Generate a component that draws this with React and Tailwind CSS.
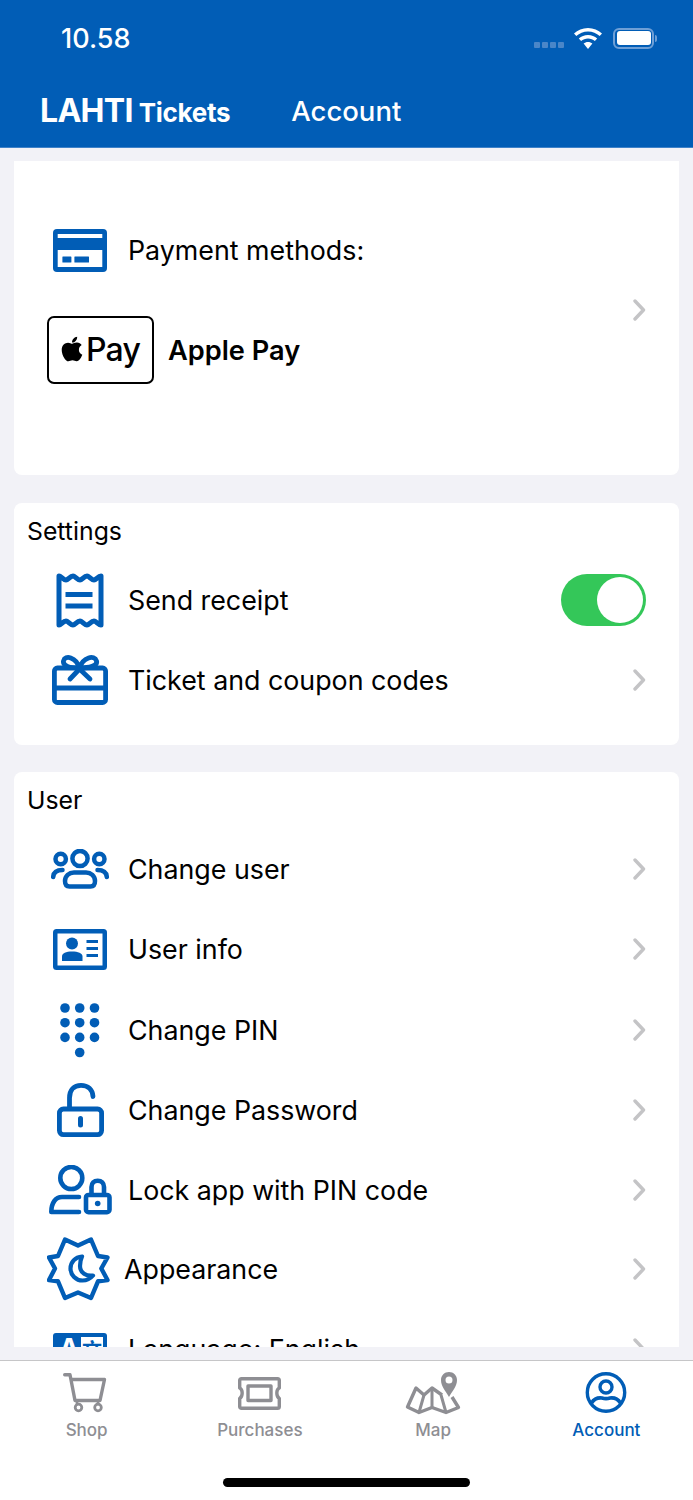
import React from "react";
import { FaApple } from "react-icons/fa";

const BLUE = "#015DB6";
const GREY = "#8E8E93";

function Chevron() {
  return (
    <svg width="13" height="22" viewBox="0 0 13 22" fill="none" className="shrink-0">
      <path d="M2 2 L10.5 11 L2 20" stroke="#C4C4C6" strokeWidth="3.4" strokeLinecap="round" strokeLinejoin="round" />
    </svg>
  );
}

const CardIcon = () => (
  <svg width="54" height="43" viewBox="0 0 54 43">
    <rect width="54" height="43" rx="4" fill={BLUE} />
    <rect x="4.7" y="5" width="44.6" height="4" fill="#fff" />
    <rect x="4.7" y="21" width="44.6" height="17" fill="#fff" />
    <rect x="9.4" y="27.4" width="9" height="6" rx="0.5" fill={BLUE} />
    <rect x="21.4" y="27.4" width="14.6" height="6" rx="0.5" fill={BLUE} />
  </svg>
);

const ReceiptIcon = () => (
  <svg width="48" height="55" viewBox="0 0 48 55" fill="none" stroke={BLUE} strokeWidth="5" strokeLinejoin="round" strokeLinecap="round">
    <path d="M3 3 C5 3 7 7 10 7 C12 7 14 3 17 3 C19 3 21 7 24 7 C26 7 28 3 31 3 C33 3 35 7 38 7 C40 7 42 3 45 3 V52 C42 52 40 48 38 48 C35 48 33 52 31 52 C28 52 26 48 24 48 C21 48 19 52 17 52 C14 52 12 48 10 48 C7 48 5 52 3 52 Z" />
    <path d="M9.5 21.5 H36.5 M9.5 33 H36.5" strokeLinecap="butt" />
  </svg>
);

const GiftIcon = () => (
  <svg width="56" height="50" viewBox="0 0 56 50" fill="none" stroke={BLUE} strokeWidth="4.8" strokeLinejoin="round" strokeLinecap="round">
    <rect x="2.4" y="13" width="51.2" height="34.5" rx="3" />
    <path d="M2 33 H54" />
    <path d="M27.5 13 C24 2 13 -0.5 11.5 6 C10.5 11 18 13 27.5 13 C37 13 46 11 44.5 6 C42.5 -0.5 31 2 27.5 13" />
    <path d="M18 24 L27.5 14 L38 24" />
  </svg>
);

const UsersIcon = () => (
  <svg width="58" height="40" viewBox="0 0 58 40" fill="none" stroke={BLUE} strokeWidth="4.5" strokeLinecap="round">
    <circle cx="29" cy="9.5" r="7.6" />
    <circle cx="9.7" cy="10" r="5.2" />
    <circle cx="48.3" cy="10" r="5.2" />
    <path d="M2.200 28 C2.500 23 6 21 11.500 21 M55.800 28 C55.500 23 52 21 46.500 21" />
    <path d="M14 32 C14 27 18 23.500 23 23.500 H35 C40 23.500 44 27 44 32 C44 35.500 42.500 37.500 39.500 37.500 H18.500 C15.500 37.500 14 35.500 14 32 Z" />
  </svg>
);

const IdIcon = () => (
  <svg width="54" height="41" viewBox="0 0 54 41">
    <rect width="54" height="41" rx="3.500" fill={BLUE} />
    <rect x="4.500" y="4.500" width="45" height="32" fill="#fff" />
    <circle cx="19" cy="14.500" r="6" fill={BLUE} />
    <path d="M9 32 V27.500 C9 24 13 22.500 19 22.500 C25 22.500 29.500 24 29.500 27.500 V32 Z" fill={BLUE} />
    <path d="M33.500 11 H45 V14 H33.500 Z M33.500 18 H45 V21 H33.500 Z M33.500 25 H45 V28 H33.500 Z" fill={BLUE} />
  </svg>
);

const KeypadIcon = () => (
  <svg width="40" height="55" viewBox="0 0 40 55" fill={BLUE}>
    {[5, 19.7, 34.500].flatMap((x) => [5, 19.700, 34.400].map((y) => <circle key={`${x}-${y}`} cx={x} cy={y} r="4.800" />))}
    <circle cx="19.700" cy="49.500" r="4.800" />
  </svg>
);

const LockOpenIcon = () => (
  <svg width="47" height="54" viewBox="0 0 47 54" fill="none" stroke={BLUE} strokeWidth="4.800" strokeLinecap="round" strokeLinejoin="round">
    <rect x="2.400" y="26" width="42.200" height="25.600" rx="4" />
    <path d="M12.500 25 V15 C12.500 7 17 2.400 24 2.400 C31 2.400 35.500 6.500 36 13.500" />
    <path d="M23.500 35.500 V42" strokeWidth="5" />
  </svg>
);

const PersonLockIcon = () => (
  <svg width="63" height="50" viewBox="0 0 63 50" fill="none" stroke={BLUE} strokeWidth="4.600" strokeLinecap="round" strokeLinejoin="round">
    <circle cx="22.300" cy="13" r="11" />
    <path d="M30 32 H13 C6.500 32 2.300 38 2.300 47 H30" />
    <rect x="37" y="30" width="23.500" height="17.200" rx="2.500" />
    <path d="M42.500 29 V22 C42.500 18 45 15.800 48.700 15.800 C52.500 15.800 55 18 55 22 V29" />
    <circle cx="48.700" cy="38.500" r="2.800" fill={BLUE} stroke="none" />
  </svg>
);

const SunMoonIcon = () => (
  <svg width="63" height="64" viewBox="0 0 63 64" fill="none" stroke={BLUE} strokeWidth="4.400" strokeLinejoin="round" className="mr-[3px]">
    <path d="M31 8.500 L44 2.500 L51 19 L60.500 20.500 L54.300 31.500 L60.500 43 L51 44.300 L44 61 L31 55.500 L18 61 L11 44.300 L2 43 L8 31.500 L2 20.500 L11 19 L18 2.500 Z" />
    <path d="M35 19.500 C28 20 23.500 25.500 23.500 31.500 C23.500 38 29 43.500 35.500 43.500 C40 43.500 43.500 41.500 46 38.500 C39.500 39.500 33 36 33 29 C33 25.500 33.500 22.500 35 19.500 Z" strokeWidth="4.200" />
  </svg>
);

const LanguageIcon = () => (
  <div className="relative mt-[9px] h-[41px] w-[54px] overflow-hidden rounded-[3px] bg-[#015DB6]">
    <span className="absolute left-[6px] top-[-4px] text-[27px] font-bold leading-[40px] text-white">A</span>
    <div className="absolute bottom-[4px] left-[28px] top-[4px] w-[22px] bg-white" />
    <span className="absolute left-[29px] top-[5px] text-[20px] font-bold leading-[24px] text-[#015DB6] [font-family:'Noto_Sans_CJK_SC',sans-serif]">文</span>
  </div>
);

const rowText = "text-[#000] text-[26.800px] leading-[36px]";

function Row({ icon, label, right, cls = "h-[80px]", textGap = "ml-[12px]" }) {
  return (
    <div className={`flex items-center pr-[33px] ${cls}`}>
      <div className="ml-[30px] flex w-[72px] shrink-0 items-center justify-center">{icon}</div>
      <span className={`${textGap} flex-1 ${rowText}`}>{label}</span>
      {right ?? <Chevron />}
    </div>
  );
}

const Toggle = () => (
  <div className="flex h-[52px] w-[85px] items-center justify-end rounded-full bg-[#34C759] pr-[3px]">
    <div className="h-[46px] w-[46px] rounded-full bg-white" />
  </div>
);

const CartTab = (
  <svg width="44" height="40" viewBox="0 0 44 40" fill="none" stroke={GREY} strokeWidth="3.400" strokeLinejoin="round" strokeLinecap="round" className="mr-[3px]">
    <path d="M1.700 1.700 H7 L12 27.500 H37 L41.500 6.500 H8" />
    <circle cx="15.500" cy="34.500" r="3.300" strokeWidth="2.800" />
    <circle cx="35" cy="34.500" r="3.300" strokeWidth="2.800" />
    <path d="M14 27.500 V31 M35 27.500 V31" strokeWidth="2.600" />
  </svg>
);

const TicketTab = (
  <svg width="43" height="33" viewBox="0 0 43 33" fill="none" stroke={GREY} strokeWidth="3.400" strokeLinejoin="round">
    <path d="M3.500 1.700 H39.500 C40.700 1.700 41.300 2.300 41.300 3.500 V11 C38 12.500 38 19.500 41.300 21.500 V29.500 C41.300 30.700 40.700 31.300 39.500 31.300 H3.500 C2.300 31.300 1.700 30.700 1.700 29.500 V21.500 C5 19.500 5 12.500 1.700 11 V3.500 C1.700 2.300 2.300 1.700 3.500 1.700 Z" />
    <rect x="10" y="9" width="23" height="14.500" />
  </svg>
);

const MapTab = (
  <svg width="56" height="44" viewBox="0 0 56 44" fill="none" stroke={GREY} strokeWidth="3.400" strokeLinejoin="round">
    <path d="M37 24 L27 17 L19 24 L11 17 L2.500 36 L14 41.500 L27 36.500 L41 41.500 L53.500 36.500 L47 26" />
    <path d="M19 24 L14 41.500 M27 17 V36.500 M36 24 L41 41.500" strokeWidth="3" />
    <path fillRule="evenodd" d="M44 26 C40 19 36 15 36 9 C36 4.500 39.500 1 44 1 C48.500 1 52 4.500 52 9 C52 15 48 19 44 26 Z M44 5.500 A3.500 3.500 0 1 0 44 12.500 A3.500 3.500 0 1 0 44 5.500 Z" fill={GREY} stroke="none" />
  </svg>
);

const AccountTab = (
  <svg width="42" height="42" viewBox="0 0 42 42" fill="none" stroke={BLUE} strokeWidth="3.400">
    <circle cx="21" cy="20.500" r="18.700" />
    <circle cx="21" cy="15" r="6" />
    <path d="M6.500 31 C9 27 13 25.500 17 26 C20 27 22 27 25 26 C29 25.500 33 27 35.500 31" strokeWidth="3.600" />
  </svg>
);

function Tab({ icon, label, active }) {
  return (
    <div className={`flex w-[173.250px] flex-col items-center ${active ? "text-[#015DB6]" : "text-[#8E8E93]"}`}>
      <div className="flex h-[46px] items-center justify-center">{icon}</div>
      <span className="mt-[4px] text-[17px] font-medium leading-[20px]">{label}</span>
    </div>
  );
}

export default function App() {
  return (
    <div className="flex h-[1500px] w-[693px] flex-col overflow-hidden bg-[#F2F2F7] [font-family:Inter,'Liberation_Sans',sans-serif]">
      <header className="h-[148px] shrink-0 border-b border-[#3F82C9] bg-[#015DB6] text-white">
        <div className="flex h-[76px] items-center justify-between pl-[61px] pr-[36px]">
          <span className="mt-[2px] text-[27px] font-medium leading-[32px]">10.58</span>
          <div className="flex items-center">
            <div className="mr-[10px] mt-[14px] flex gap-[2px]">
              {[0, 1, 2, 3].map((i) => <div key={i} className="h-[6px] w-[6px] rounded-[1px] bg-[#4A86C8]" />)}
            </div>
            <svg width="28" height="21" viewBox="0 0 28 21" fill="white" className="mr-[11px]">
              <path d="M14 0 C19.500 0 24.300 2.200 28 5.600 L25.700 8 C22.600 5.200 18.500 3.400 14 3.400 C9.500 3.400 5.400 5.200 2.300 8 L0 5.600 C3.700 2.200 8.500 0 14 0 Z" />
              <path d="M14 7 C17.500 7 20.700 8.300 23.200 10.500 L20.900 12.900 C19 11.300 16.600 10.400 14 10.400 C11.400 10.400 9 11.300 7.100 12.900 L4.800 10.500 C7.300 8.300 10.500 7 14 7 Z" />
              <path d="M14 14 C15.700 14 17.200 14.600 18.400 15.600 L14 21 L9.600 15.600 C10.800 14.600 12.300 14 14 14 Z" />
            </svg>
            <div className="flex items-center">
              <div className="flex h-[21px] w-[41px] items-center justify-center rounded-[6px] border-2 border-[#6E9FD6]">
                <div className="h-[14px] w-[34px] rounded-[3px] bg-white" />
              </div>
              <div className="ml-[1px] h-[7px] w-[2px] rounded-r-[2px] bg-[#6E9FD6]" />
            </div>
          </div>
        </div>
        <div className="flex h-[70px] items-center pl-[40px]">
          <span className="text-[32px] font-bold leading-[40px] tracking-[-0.7px]">LAHTI</span>
          <span className="ml-[6px] mt-[3px] text-[26px] font-bold leading-[36px] tracking-[-0.3px]">Tickets</span>
          <span className="ml-[61px] text-[27.500px] font-medium leading-[36px]">Account</span>
        </div>
      </header>

      <main className="flex h-[1212px] shrink-0 flex-col pb-[13px] pl-[14px] pr-[14px] pt-[13px]">
        <div className="flex flex-1 flex-col overflow-hidden">
          <section className="flex h-[314px] shrink-0 items-center rounded-b-[8px] bg-white pb-[16px] pr-[33px]">
            <div className="flex-1">
              <div className="flex h-[80px] items-center">
                <div className="ml-[30px] flex w-[72px] justify-center"><CardIcon /></div>
                <span className={`ml-[12px] ${rowText}`}>Payment methods:</span>
              </div>
              <div className="mt-[26px] flex items-center pl-[33px]">
                <div className="flex h-[68px] w-[107px] items-center justify-center rounded-[7px] border-2 border-black pr-[3px]">
                  <FaApple size={28} color="#000" className="mb-[3px]" />
                  <span className="text-[32px] font-medium leading-[40px] tracking-[-0.8px] text-black">Pay</span>
                </div>
                <span className="ml-[14px] pt-[1px] text-[27.200px] font-semibold leading-[36px] text-black">Apple Pay</span>
              </div>
              <div className="h-[26px]" />
            </div>
            <Chevron />
          </section>

          <section className="mt-[28px] h-[242px] shrink-0 rounded-[8px] bg-white pt-[10px]">
            <h2 className="pl-[13px] text-[24.800px] font-normal leading-[36px] text-black">Settings</h2>
            <div className="mt-[11px]">
              <Row icon={<ReceiptIcon />} label="Send receipt" right={<Toggle />} />
              <Row icon={<GiftIcon />} label="Ticket and coupon codes" />
            </div>
          </section>

          <section className="mt-[27px] flex-1 rounded-t-[8px] bg-white pt-[10px]">
            <h2 className="pl-[13px] text-[24.800px] font-normal leading-[36px] text-black">User</h2>
            <div className="mt-[11px]">
              <Row icon={<UsersIcon />} label="Change user" />
              <Row icon={<IdIcon />} label="User info" />
              <Row icon={<KeypadIcon />} label="Change PIN" cls="mt-[1px] h-[80px]" />
              <Row icon={<LockOpenIcon />} label="Change Password" />
              <Row icon={<PersonLockIcon />} label="Lock app with PIN code" />
              <Row icon={<SunMoonIcon />} label="Appearance" cls="mt-[-1px] h-[80px]" textGap="ml-[8px]" />
              <Row icon={<LanguageIcon />} label="Language: English" />
            </div>
          </section>
        </div>
      </main>

      <nav className="flex-1 border-t border-[#C6C6C8] bg-white">
        <div className="flex pt-[9px]">
          <Tab icon={CartTab} label="Shop" />
          <Tab icon={TicketTab} label="Purchases" />
          <Tab icon={MapTab} label="Map" />
          <Tab icon={AccountTab} label="Account" active />
        </div>
        <div className="mx-auto mt-[38px] h-[9px] w-[247px] rounded-full bg-black" />
      </nav>
    </div>
  );
}
